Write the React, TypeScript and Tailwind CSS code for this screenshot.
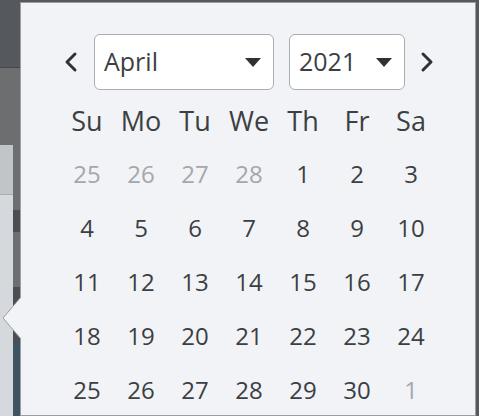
import React from "react";

const WEEKDAYS = ["Su", "Mo", "Tu", "We", "Th", "Fr", "Sa"];

type Day = { n: number; muted?: boolean };

const WEEKS: Day[][] = [
  [{ n: 25, muted: true }, { n: 26, muted: true }, { n: 27, muted: true }, { n: 28, muted: true }, { n: 1 }, { n: 2 }, { n: 3 }],
  [{ n: 4 }, { n: 5 }, { n: 6 }, { n: 7 }, { n: 8 }, { n: 9 }, { n: 10 }],
  [{ n: 11 }, { n: 12 }, { n: 13 }, { n: 14 }, { n: 15 }, { n: 16 }, { n: 17 }],
  [{ n: 18 }, { n: 19 }, { n: 20 }, { n: 21 }, { n: 22 }, { n: 23 }, { n: 24 }],
  [{ n: 25 }, { n: 26 }, { n: 27 }, { n: 28 }, { n: 29 }, { n: 30 }, { n: 1, muted: true }],
];

const Caret = () => (
  <svg width="16" height="9" viewBox="0 0 16 9">
    <path d="M0 0 L16 0 L8 9 Z" fill="#2f3235" />
  </svg>
);

const Chevron: React.FC<{ dir: "left" | "right" }> = ({ dir }) => (
  <svg width="14" height="22" viewBox="0 0 14 22">
    <path
      d={dir === "left" ? "M11 3 L3 11 L11 19" : "M3 3 L11 11 L3 19"}
      fill="none"
      stroke="#2f3235"
      strokeWidth="3"
      strokeLinecap="round"
      strokeLinejoin="round"
    />
  </svg>
);

const Select: React.FC<{ label: string; width: string }> = ({ label, width }) => (
  <div
    className={`${width} h-[56px] bg-white border border-[#a9adb2] rounded-[6px] flex items-center justify-between pl-[9px] pr-[12px]`}
  >
    <span className="text-[25px] text-[#3c3f42]">{label}</span>
    <Caret />
  </div>
);

export default function App() {
  return (
    <div
      className="w-[479px] h-[416px] flex overflow-hidden relative bg-[#55595d]"
      style={{ fontFamily: '"Open Sans", "Noto Sans", sans-serif' }}
    >
      {/* page behind the popover */}
      <div className="w-[20px] h-full flex flex-col shrink-0">
        <div className="h-[68px] bg-[#55595d] border-b border-[#43464a]" />
        <div className="h-[77px] bg-[#6c6e70]" />
        <div className="flex flex-1">
          <div className="w-[13px] flex flex-col">
            <div className="h-[50px] bg-[#c1c4c9] border-b border-[#a9acb1]" />
            <div className="flex-1 bg-[#d5d8dc]" />
          </div>
          <div className="w-[7px] flex flex-col">
            <div className="h-[65px] bg-[#6c6e70]" />
            <div className="h-[22px] bg-[#4b4f53]" />
            <div className="h-[55px] bg-[#6c6e70]" />
            <div className="h-[55px] bg-[#4b4e52]" />
            <div className="flex-1 bg-[#3e5461]" />
          </div>
        </div>
      </div>

      {/* popover */}
      <div className="w-[456px] mt-[2px] bg-[#f1f3f7] border border-[#9a9ea3] shrink-0 pl-[39px] pt-[31px]">
        <div className="flex items-center w-[378px]">
          <div className="w-[34px] flex justify-start pl-[4px]">
            <Chevron dir="left" />
          </div>
          <Select label="April" width="w-[180px]" />
          <div className="w-[15px]" />
          <Select label="2021" width="w-[116px]" />
          <div className="w-[33px] flex justify-end pr-[4px]">
            <Chevron dir="right" />
          </div>
        </div>

        <div className="grid grid-cols-[repeat(7,54px)] mt-[11px]">
          {WEEKDAYS.map((d) => (
            <div
              key={d}
              className="h-[40px] flex items-center justify-center text-[27px] text-[#3c3f42]"
            >
              {d}
            </div>
          ))}
        </div>

        <div className="grid grid-cols-[repeat(7,54px)] mt-[6px]">
          {WEEKS.flat().map((d, i) => (
            <div
              key={i}
              className={`h-[54px] flex items-center justify-center text-[24px] ${
                d.muted ? "text-[#a5a7aa]" : "text-[#3c3f42]"
              }`}
            >
              {d.n}
            </div>
          ))}
        </div>
      </div>

      <div className="flex-1 bg-[#55595d]" />

      {/* popover arrow */}
      <svg
        className="absolute left-[3px] top-[297px]"
        width="19"
        height="42"
        viewBox="0 0 19 42"
      >
        <path d="M18 0 L0 21 L18 42 Z" fill="#f1f3f7" />
        <path d="M18 0 L0 21 L18 42" fill="none" stroke="#9a9ea3" strokeWidth="1" />
      </svg>
    </div>
  );
}
